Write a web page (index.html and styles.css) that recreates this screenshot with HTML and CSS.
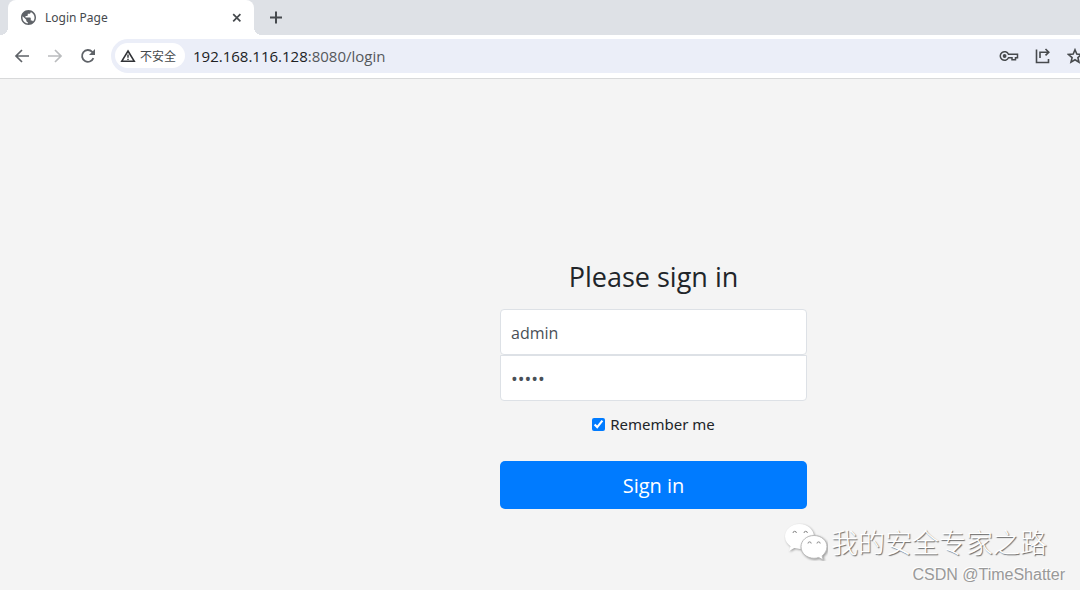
FILE: index.html
```html
<!DOCTYPE html>
<html lang="en">
<head>
<meta charset="utf-8">
<title>Login Page</title>
<link rel="stylesheet" href="styles.css">
</head>
<body>
<header class="browser">
  <div class="tabstrip">
    <div class="tab">
      <svg class="favicon" viewBox="2 2 20 20"><path fill="#5f6368" d="M12 2C6.480 2 2 6.480 2 12s4.480 10 10 10 10-4.480 10-10S17.520 2 12 2zm-1 17.930c-3.950-.49-7-3.850-7-7.930 0-.62.08-1.210.21-1.790L9 15v1c0 1.100.9 2 2 2v1.930zm6.900-2.540c-.26-.81-1-1.390-1.900-1.390h-1v-3c0-.55-.45-1-1-1H8v-2h2c.55 0 1-.45 1-1V7h2c1.100 0 2-.9 2-2v-.41c2.930 1.190 5 4.060 5 7.410 0 2.080-.8 3.970-2.100 5.390z"/></svg>
      <span class="tab-title">Login Page</span>
      <button class="icon-button" aria-label="Close tab"><svg width="16" height="16" viewBox="0 0 16 16"><path d="M4.200 4.200l7.200 7.200M11.400 4.200l-7.200 7.200" stroke="#45494d" stroke-width="1.700" fill="none"/></svg></button>
    </div>
    <button class="icon-button new-tab" aria-label="New tab"><svg width="16" height="16" viewBox="0 0 16 16"><path d="M8 1.500v12M2 7.500h12" stroke="#45494d" stroke-width="2" fill="none"/></svg></button>
  </div>
  <nav class="toolbar">
    <div class="nav-buttons">
      <button class="icon-button" aria-label="Back"><svg width="16" height="16" viewBox="0 0 16 16"><path d="M15 8H2M8 2L2 8l6 6" stroke="#5f6368" stroke-width="1.700" fill="none"/></svg></button>
      <button class="icon-button" aria-label="Forward"><svg width="16" height="16" viewBox="0 0 16 16"><path d="M1 8h13M8 2l6 6-6 6" stroke="#babcbe" stroke-width="1.700" fill="none"/></svg></button>
      <button class="icon-button" aria-label="Reload"><svg width="16" height="16" viewBox="0 0 16 16"><path d="M13.400 10.200A5.900 5.900 0 1 1 12.200 3.800L14 5.600" stroke="#5f6368" stroke-width="1.800" fill="none"/><path d="M15 1v6H9z" fill="#5f6368"/></svg></button>
    </div>
    <div class="omnibox">
      <button class="security" lang="zh-CN"><svg width="16" height="14" viewBox="0 0 16 14"><path d="M8 2L14.200 12.200H1.800z" stroke="#303236" stroke-width="1.600" fill="none"/><path d="M8 5.500v3.200M8 9.700v1.400" stroke="#303236" stroke-width="1.400"/></svg>不安全</button>
      <div class="address">192.168.116.128<span class="path">:8080/login</span></div>
      <div class="actions">
        <button class="icon-button" aria-label="Passwords"><svg width="20" height="16" viewBox="0 0 20 16"><path d="M9.500 6.300A4.300 4.300 0 1 0 9.500 9.700H13v2h3.500v-2H18.500V6.300z" stroke="#474a4d" stroke-width="1.500" fill="none"/><circle cx="5.600" cy="8" r="1.900" fill="#474a4d"/></svg></button>
        <button class="icon-button" aria-label="Share"><svg width="16" height="16" viewBox="0 0 16 16"><path d="M1.500 1.500v13h12V11M5 10V4.200h8.500M10.500 1l3.300 3.200-3.300 3.200" stroke="#474a4d" stroke-width="1.600" fill="none"/></svg></button>
        <button class="icon-button" aria-label="Bookmark"><svg width="16" height="16" viewBox="0 0 16 16"><path d="M8 1.800l1.800 4.300 4.700.4-3.600 3.100 1.100 4.600L8 11.800l-4 2.400 1.100-4.600L1.500 6.500l4.700-.4z" stroke="#474a4d" stroke-width="1.600" fill="none"/></svg></button>
      </div>
    </div>
  </nav>
</header>
<main class="page">
  <form class="signin">
    <h1 class="heading">Please sign in</h1>
    <input class="field" type="text" aria-label="Username" value="admin">
    <input class="field password" type="password" aria-label="Password" value="admin">
    <label class="remember"><input class="tick" type="checkbox" checked>Remember me</label>
    <button class="submit" type="button">Sign in</button>
  </form>
</main>
<aside class="watermark">
  <div class="channel" lang="zh-CN">
    <svg class="wechat" width="44" height="38" viewBox="0 0 44 38"><path class="bubble" d="M15.500 1C7.300 1 1 6.600 1 13.500c0 4.100 2.200 7.400 5.500 9.700L5 28l5.300-2.900c1.900.5 3.700.8 5.700.8C23 25.500 30 20 30 13.500S23.800 1 15.500 1z"/><path class="bubble front" d="M30 12.500c-7.200 0-13 4.900-13 11.300s5.800 11.500 13 11.500c1.700 0 3.200-.2 4.700-.8l4.600 2.600-1.200-4.200c2.900-2.300 4.900-5.500 4.900-9.100 0-6.400-5.800-11.300-13-11.300z"/><path class="eyes" d="M9 10a1.700 1.700 0 0 1 3.400 0M20 10a1.700 1.700 0 0 1 3.400 0M24 20.500a1.600 1.600 0 0 1 3.200 0M33 20.500a1.600 1.600 0 0 1 3.200 0"/></svg>
    <span>我的安全专家之路</span>
  </div>
  <div class="credit">CSDN @TimeShatter</div>
</aside>
</body>
</html>
```
FILE: styles.css
```css
* { box-sizing: border-box; }
body {
  margin: 0;
  min-height: 100vh;
  display: flex;
  flex-direction: column;
  position: relative;
  overflow: hidden;
  background: #f4f4f4;
  color: #212529;
  font-family: "Open Sans", "Noto Sans CJK SC", sans-serif;
  font-size: 16px;
}
button { font: inherit; color: inherit; border: 0; }
svg { display: block; flex: none; }
.icon-button { display: flex; padding: 0; background: none; }
.browser { background: #fff; border-bottom: 1px solid #d8d9da; }
.tabstrip {
  display: flex;
  align-items: center;
  height: 35px;
  padding-left: 8px;
  background: #dee1e6;
}
.tab {
  position: relative;
  display: flex;
  align-items: center;
  width: 246px;
  height: 35px;
  padding: 0 9px 0 13px;
  border-radius: 8px 8px 0 0;
  background: #fff;
}
.tab::before, .tab::after {
  content: "";
  position: absolute;
  bottom: 0;
  width: 8px;
  height: 8px;
}
.tab::before { right: 100%; background: radial-gradient(circle at 0 0, #dee1e6 8px, #fff 8px); }
.tab::after { left: 100%; background: radial-gradient(circle at 100% 0, #dee1e6 8px, #fff 8px); }
.favicon { width: 15px; height: 15px; }
.tab-title { flex: 1; margin-left: 9px; font-family: "Noto Sans", sans-serif; font-size: 12px; color: #45494d; }
.new-tab { margin-left: 14px; }
.toolbar { display: flex; align-items: center; height: 43px; padding: 0 0 2px 14px; }
.nav-buttons { display: flex; gap: 17px; width: 97px; }
.omnibox {
  flex: 1;
  display: flex;
  align-items: center;
  height: 34px;
  padding-left: 4px;
  border-radius: 17px 0 0 17px;
  background: #ebeef8;
}
.security {
  display: flex;
  align-items: center;
  gap: 4px;
  height: 25px;
  padding: 0 9px 0 5px;
  border-radius: 13px;
  background: #fff;
  color: #45494d;
  font-family: "Noto Sans CJK SC", sans-serif;
  font-size: 12px;
}
.address { flex: 1; margin-left: 8px; font-size: 15px; color: #202124; }
.path { color: #55585c; }
.actions { display: flex; align-items: center; gap: 16px; margin-right: -3px; }
.page { flex: 1; display: flex; justify-content: center; align-items: center; padding-left: 227px; }
.signin { display: flex; flex-direction: column; width: 307px; padding-top: 100px; }
.heading { margin: 0 0 15px; font-size: 27px; font-weight: 400; line-height: 34px; text-align: center; }
.field {
  width: 100%;
  height: 46px;
  padding: 2px 10px 0;
  border: 1px solid #dde1e6;
  border-radius: 4px;
  background: #fff;
  color: #495057;
  font: inherit;
  outline: none;
}
.password { border-radius: 0 0 4px 4px; font-size: 18px; }
.remember {
  display: flex;
  justify-content: center;
  align-items: center;
  gap: 5px;
  margin: 11px 0 25px;
  line-height: 24px;
  font-family: "Noto Sans", sans-serif;
  font-size: 15px;
}
.tick { width: 13px; height: 13px; margin: 0; accent-color: #007bff; }
.submit { height: 48px; border-radius: 5px; background: #007bff; color: #fff; font-size: 20px; }
.watermark { position: absolute; right: 15px; bottom: 4px; }
.channel {
  display: flex;
  align-items: center;
  gap: 3px;
  margin: 0 18px 2px 0;
  color: #fff;
  font-family: "Noto Sans CJK SC", sans-serif;
  font-size: 27px;
  font-weight: 300;
  line-height: 40px;
  text-shadow: 1px 1px 1px #666;
}
.bubble { fill: #fff; filter: drop-shadow(1px 1px 1px #999); }
.front { stroke: #bbb; stroke-width: 1; }
.eyes { fill: none; stroke: #888; stroke-width: 1; }
.credit {
  color: #999;
  font-family: "Liberation Sans", sans-serif;
  font-size: 16px;
  line-height: 22px;
  text-align: right;
  text-shadow: -1px -1px 0 #fff;
}
```
